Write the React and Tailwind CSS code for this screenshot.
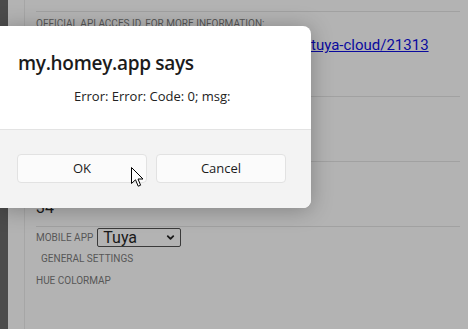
import { ChevronDown } from 'lucide-react';

const label = "text-[10px] uppercase text-[#575757]";

const Cursor = () => (
    <svg className="absolute left-[131px] top-[167px]" width="13" height="21" viewBox="0 0 13 21">
        <path
            d="M0.5 0.5 L0.5 16.5 L4.5 12.8 L7.2 19.2 L9.6 18.2 L7 12 L12 12 Z"
            fill="#fff"
            stroke="#000"
            strokeWidth="1"
            strokeLinejoin="round"
        />
    </svg>
);

const AlertDialog = () => (
    <div
        className="absolute left-0 top-[26px] w-[311px] h-[182px] rounded-r-[8px] overflow-hidden bg-white shadow-[0_2px_22px_rgba(0,0,0,0.28)] flex flex-col"
        style={{ fontFamily: '"Open Sans", "Noto Sans", sans-serif' }}
    >
        <div className="h-[103px] pl-[18px] pt-[23px]">
            <div className="text-[19px] leading-[28px] font-semibold text-[#1b1b1b] tracking-[-0.3px]">my.homey.app says</div>
            <div className="pl-[56px] mt-[10px] text-[13px] leading-[18px] text-[#222]">Error: Error: Code: 0; msg:</div>
        </div>
        <div className="flex-1 border-t border-[#e3e3e3] bg-[#f3f3f3] pl-[17px] pt-[24px] flex gap-[9px] items-start">
            <button className="w-[130px] h-[29px] rounded-[4px] bg-[#fbfbfb] border border-[#e2e2e2] text-[13px] text-[#1b1b1b]">OK</button>
            <button className="w-[130px] h-[29px] rounded-[4px] bg-[#fbfbfb] border border-[#e2e2e2] text-[13px] text-[#1b1b1b]">Cancel</button>
        </div>
    </div>
);

export default function App() {
    return (
        <div
            className="relative w-[468px] h-[329px] overflow-hidden bg-[#b3b3b3] flex"
            style={{ fontFamily: 'Roboto, "Liberation Sans", Arial, sans-serif' }}
        >
            {/* sidebar edge */}
            <div className="w-[8px] bg-[#4b4b4b]" />
            <div className="w-[16px]" />
            <div className="flex-1 border-l border-[#a6a6a6] pl-[11px] pr-[8px] pt-[11px]">
                <section className="h-[85px] border-t border-[#a1a1a1]">
                    <div className={`${label} mt-[6px] leading-[12px]`}>Official API acces ID, for more information:</div>
                    <a href="#" className="block mt-[6px] ml-[275px] text-[15px] leading-[18px] text-[#0a0a9e] underline">tuya-cloud/21313</a>
                </section>
                <section className="h-[65px] border-t border-[#a1a1a1]" />
                <section className="h-[65px] border-t border-[#a1a1a1]">
                    <div className="pt-[36px] text-[16px] leading-[20px] text-[#1a1a1a]">34</div>
                </section>
                <section className="border-t border-[#a1a1a1] pt-[1px]">
                    <div className="flex items-center gap-[4px]">
                        <span className={label}>Mobile app</span>
                        <div className="relative flex">
                            <select className="appearance-none w-[84px] h-[19px] border border-[#3a3a3a] rounded-[2px] bg-transparent pl-[5px] text-[16px] leading-[17px] text-[#1a1a1a]">
                                <option>Tuya</option>
                            </select>
                            <ChevronDown className="absolute right-[5px] top-[4px] pointer-events-none" size={11} strokeWidth={4} color="#1a1a1a" />
                        </div>
                    </div>
                    <div className={`${label} ml-[5px] mt-[6px] leading-[12px]`}>General settings</div>
                    <div className={`${label} mt-[10px] leading-[12px]`}>Hue colormap</div>
                </section>
            </div>
            <AlertDialog />
            <Cursor />
        </div>
    );
}
